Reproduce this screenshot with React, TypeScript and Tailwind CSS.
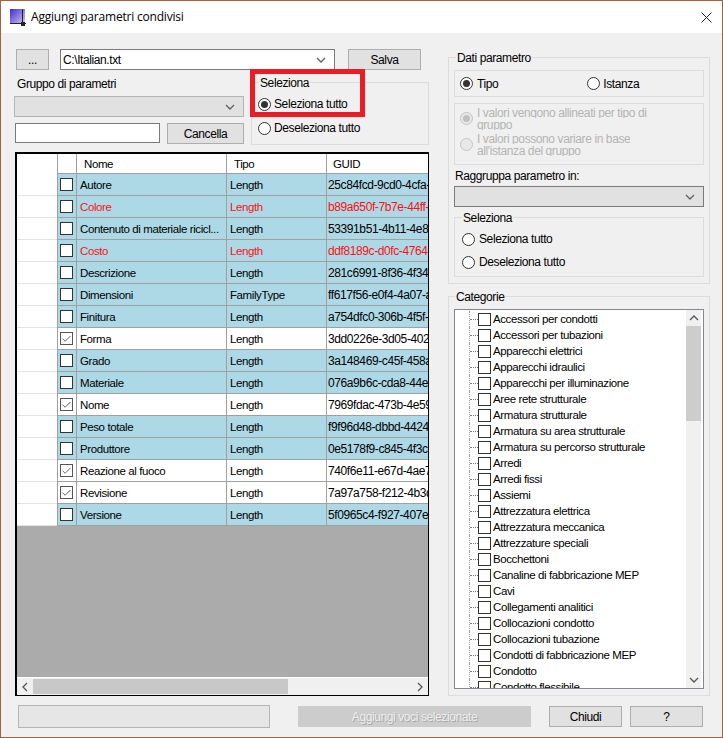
import React from 'react';
import { Check } from 'lucide-react';

const rows = [
  { name: 'Autore', tipo: 'Length', guid: '25c84fcd-9cd0-4cfa-8a11' },
  { name: 'Colore', tipo: 'Length', guid: 'b89a650f-7b7e-44ff-8a11', red: true },
  { name: 'Contenuto di materiale ricicl...', tipo: 'Length', guid: '53391b51-4b11-4e8a-8a11' },
  { name: 'Costo', tipo: 'Length', guid: 'ddf8189c-d0fc-4764-8a11', red: true },
  { name: 'Descrizione', tipo: 'Length', guid: '281c6991-8f36-4f34-8a11' },
  { name: 'Dimensioni', tipo: 'FamilyType', guid: 'ff617f56-e0f4-4a07-a811' },
  { name: 'Finitura', tipo: 'Length', guid: 'a754dfc0-306b-4f5f-8a11' },
  { name: 'Forma', tipo: 'Length', guid: '3dd0226e-3d05-402a-8a11', checked: true },
  { name: 'Grado', tipo: 'Length', guid: '3a148469-c45f-458a-8a11' },
  { name: 'Materiale', tipo: 'Length', guid: '076a9b6c-cda8-44ea-8a11' },
  { name: 'Nome', tipo: 'Length', guid: '7969fdac-473b-4e59-8a11', checked: true },
  { name: 'Peso totale', tipo: 'Length', guid: 'f9f96d48-dbbd-4424-8a11' },
  { name: 'Produttore', tipo: 'Length', guid: '0e5178f9-c845-4f3c-8a11' },
  { name: 'Reazione al fuoco', tipo: 'Length', guid: '740f6e11-e67d-4ae7-8a11', checked: true },
  { name: 'Revisione', tipo: 'Length', guid: '7a97a758-f212-4b3d-8a11', checked: true },
  { name: 'Versione', tipo: 'Length', guid: '5f0965c4-f927-407e-8a11' },
];

const categories = [
  'Accessori per condotti',
  'Accessori per tubazioni',
  'Apparecchi elettrici',
  'Apparecchi idraulici',
  'Apparecchi per illuminazione',
  'Aree rete strutturale',
  'Armatura strutturale',
  'Armatura su area strutturale',
  'Armatura su percorso strutturale',
  'Arredi',
  'Arredi fissi',
  'Assiemi',
  'Attrezzatura elettrica',
  'Attrezzatura meccanica',
  'Attrezzature speciali',
  'Bocchettoni',
  'Canaline di fabbricazione MEP',
  'Cavi',
  'Collegamenti analitici',
  'Collocazioni condotto',
  'Collocazioni tubazione',
  'Condotti di fabbricazione MEP',
  'Condotto',
  'Condotto flessibile',
];

function Chevron({ dir = 'down', color = '#606060' }: { dir?: 'down' | 'up' | 'left' | 'right'; color?: string }) {
  const pts = {
    down: '1,1 5,5 9,1',
    up: '1,5 5,1 9,5',
    left: '5,1 1,5 5,9',
    right: '1,1 5,5 1,9',
  }[dir];
  const w = dir === 'left' || dir === 'right' ? 6 : 10;
  const h = dir === 'left' || dir === 'right' ? 10 : 6;
  return (
    <svg width={w} height={h} viewBox={`0 0 ${w} ${h}`} fill="none">
      <polyline points={pts} stroke={color} strokeWidth="1.3" />
    </svg>
  );
}

function Radio({ on, disabled }: { on?: boolean; disabled?: boolean }) {
  return (
    <span
      className={`w-[13px] h-[13px] rounded-full border flex items-center justify-center shrink-0 ${
        disabled ? 'border-[#c4c4c4] bg-[#e8e8e8]' : 'border-[#333333] bg-white'
      }`}
    >
      {on && <span className={`w-[7px] h-[7px] rounded-full ${disabled ? 'bg-[#c0c0c0]' : 'bg-[#333333]'}`} />}
    </span>
  );
}

function Btn({ label, className }: { label: string; className: string }) {
  return (
    <div className={`h-[21px] bg-[#e1e1e1] border border-[#adadad] flex items-center justify-center ${className}`}>
      {label}
    </div>
  );
}

function Group({ title, titleLeft, className, children }: { title: string; titleLeft: string; className: string; children?: React.ReactNode }) {
  return (
    <div className={`relative border border-[#dcdcdc] ${className}`}>
      <span className={`absolute -top-[7px] bg-[#f0f0f0] px-[1px] leading-[14px] ${titleLeft}`}>{title}</span>
      {children}
    </div>
  );
}

function GridRow({ row }: { row: (typeof rows)[number] }) {
  const bg = row.checked ? 'bg-white' : 'bg-[#add8e6]';
  const text = row.red ? 'text-[#ff1010]' : 'text-black';
  return (
    <div className={`flex h-[22px] ${text}`}>
      <div className="w-[40px] bg-white border-b border-[#e4e4e4]" />
      <div className={`w-[20px] ${bg} border-l border-r border-b border-[#a0a0a0] flex items-center pl-[2px]`}>
        <span className={`w-[13px] h-[13px] border bg-white flex items-center justify-center ${row.checked ? 'border-[#555555]' : 'border-[#333333]'}`}>
          {row.checked && <Check size={12} strokeWidth={1.8} color="#4a4a4a" />}
        </span>
      </div>
      <div className={`w-[150px] ${bg} border-r border-b border-[#a0a0a0] pl-[3px] flex items-center whitespace-nowrap overflow-hidden text-[11.5px]`}>
        {row.name}
      </div>
      <div className={`w-[100px] ${bg} border-r border-b border-[#a0a0a0] pl-[3px] flex items-center text-[11.5px]`}>{row.tipo}</div>
      <div className={`flex-1 ${bg} border-b border-[#a0a0a0] pl-[1px] flex items-center whitespace-nowrap overflow-hidden`}>{row.guid}</div>
    </div>
  );
}

export default function App() {
  return (
    <div className="w-[723px] h-[738px] border border-[#a5623a] bg-[#f0f0f0] flex flex-col overflow-hidden text-[12px] text-black font-['Liberation_Sans',sans-serif] tracking-[-0.4px] leading-[14px]">
      {/* Title bar */}
      <div className="h-[32px] shrink-0 bg-white flex items-center pl-[9px] pr-[10px] tracking-[-0.2px] font-['Open_Sans',sans-serif]">
        <svg width="17" height="17" viewBox="0 0 17 17">
          <defs>
            <linearGradient id="ico" x1="0" y1="0" x2="1" y2="1">
              <stop offset="0" stopColor="#3a2fd0" />
              <stop offset="1" stopColor="#d8c8f0" />
            </linearGradient>
          </defs>
          <rect width="15" height="15" fill="url(#ico)" />
          <path d="M0 14.5H16M12.5 0V16" stroke="#222" strokeWidth="1" />
          <rect x="11" y="13" width="4" height="4" fill="#222" />
        </svg>
        <span className="ml-[4px]">Aggiungi parametri condivisi</span>
        <svg className="ml-auto" width="11" height="11" viewBox="0 0 11 11" stroke="#222" strokeWidth="1">
          <path d="M0.5 0.5L10.5 10.5M10.5 0.5L0.5 10.5" />
        </svg>
      </div>

      {/* Main columns */}
      <div className="flex h-[663px] shrink-0">
        {/* Left column */}
        <div className="w-[415px] ml-[14px] flex flex-col">
          <div className="flex mt-[16px] relative">
            <Btn label="..." className="w-[33px] ml-[1px]" />
            <div className="w-[275px] h-[21px] ml-[11px] bg-white border border-[#7a7a7a] flex items-center pl-[2px] pr-[8px] justify-between">
              C:\Italian.txt
              <Chevron />
            </div>
            <Btn label="Salva" className="w-[73px] ml-[13px]" />
          </div>

          <div className="flex mt-[6px] relative">
            <div className="w-[230px] -ml-[1px] flex flex-col">
              <span className="pl-[3px] mt-[1px]">Gruppo di parametri</span>
              <div className="h-[21px] mt-[5px] bg-[#e1e1e1] border border-[#b4b4b4] flex items-center justify-end pr-[8px]">
                <Chevron />
              </div>
              <div className="flex mt-[6px] pl-[1px]">
                <div className="w-[145px] h-[20px] bg-white border border-[#7a7a7a]" />
                <Btn label="Cancella" className="w-[77px] ml-[7px]" />
              </div>
            </div>
            <Group title="Seleziona" titleLeft="left-[7px]" className="w-[178px] h-[63px] ml-[7px] mt-[6px]">
              <div className="flex items-center ml-[6px] mt-[14px] gap-[3px]">
                <Radio on />
                <span>Seleziona tutto</span>
              </div>
              <div className="flex items-center ml-[6px] mt-[10px] gap-[3px]">
                <Radio />
                <span>Deseleziona tutto</span>
              </div>
            </Group>
            {/* Red highlight drawn on the screenshot */}
            <div className="absolute left-[235px] -top-[7px] w-[115px] h-[48px] border-[5px] border-[#ed1c24]" />
          </div>

          {/* Data grid */}
          <div className="mt-[7px] h-[544px] w-[414px] border-2 border-r border-b border-black flex flex-col">
            <div className="flex h-[20px] bg-white text-[11.5px]">
              <div className="w-[40px]" />
              <div className="w-[20px] border-l border-r border-b border-[#a0a0a0]" />
              <div className="w-[150px] border-r border-b border-[#a0a0a0] pl-[7px] flex items-center">Nome</div>
              <div className="w-[100px] border-r border-b border-[#a0a0a0] pl-[7px] flex items-center">Tipo</div>
              <div className="flex-1 border-b border-[#a0a0a0] pl-[6px] flex items-center">GUID</div>
            </div>
            {rows.map((r) => (
              <GridRow key={r.name} row={r} />
            ))}
            <div className="flex-1 bg-[#ababab]" />
            <div className="h-[18px] bg-[#f0f0f0] border-t border-white flex items-center">
              <span className="w-[16px] flex justify-center"><Chevron dir="left" color="#555555" /></span>
              <span className="w-[255px] h-[15px] bg-[#c8c8c8]" />
              <span className="ml-auto w-[16px] flex justify-center"><Chevron dir="right" color="#555555" /></span>
            </div>
          </div>
        </div>

        {/* Right column */}
        <div className="w-[262px] ml-[18px] flex flex-col mt-[24px]">
          <Group title="Dati parametro" titleLeft="left-[7px]" className="h-[227px] px-[5px] pt-[12px]">
            <div className="h-[27px] border border-[#dcdcdc] flex items-center relative pl-[5px]">
              <Radio on />
              <span className="ml-[4px]">Tipo</span>
              <span className="ml-[89px]"><Radio /></span>
              <span className="ml-[3px]">Istanza</span>
            </div>
            <div className="h-[62px] mt-[6px] border border-[#dcdcdc] pl-[5px] pt-[3px] text-[#b4b4b4]">
              <div className="flex h-[26px]">
                <span className="mt-[5px]"><Radio on disabled /></span>
                <div className="ml-[4px]">
                  <div className="h-[11px] mb-[1px] overflow-hidden leading-[12px]">I valori vengono allineati per tipo di</div>
                  <div className="h-[11px] overflow-hidden leading-[12px]">gruppo</div>
                </div>
              </div>
              <div className="flex h-[26px]">
                <span className="mt-[5px]"><Radio disabled /></span>
                <div className="ml-[4px]">
                  <div className="h-[11px] mb-[1px] overflow-hidden leading-[12px]">I valori possono variare in base</div>
                  <div className="h-[11px] overflow-hidden leading-[12px]">all'istanza del gruppo</div>
                </div>
              </div>
            </div>
            <div className="mt-[2px] pl-[1px] h-[18px] flex items-center">Raggruppa parametro in:</div>
            <div className="h-[21px] mt-[1px] bg-[#e1e1e1] border border-[#7a7a7a] flex items-center justify-end pr-[8px]">
              <Chevron />
            </div>
            <Group title="Seleziona" titleLeft="left-[7px]" className="h-[60px] mt-[10px]">
              <div className="flex items-center ml-[7px] mt-[14px] gap-[4px]">
                <Radio />
                <span>Seleziona tutto</span>
              </div>
              <div className="flex items-center ml-[7px] mt-[9px] gap-[4px]">
                <Radio />
                <span>Deseleziona tutto</span>
              </div>
            </Group>
          </Group>

          <Group title="Categorie" titleLeft="left-[6px]" className="h-[400px] mt-[12px] px-[5px] pt-[12px]">
            <div className="h-[380px] border border-[#828790] bg-white flex overflow-hidden">
              <div className="flex-1 pt-[1px] overflow-hidden text-[11.5px] tracking-[-0.4px]">
                {categories.map((c) => (
                  <div key={c} className="flex h-[16px] items-center ml-[14px] whitespace-nowrap border-l border-dotted border-[#a0a0a0]">
                    <span className="w-[8px] border-t border-dotted border-[#808080]" />
                    <span className="w-[13px] h-[13px] border border-[#333333] bg-white shrink-0" />
                    <span className="ml-[2px]">{c}</span>
                  </div>
                ))}
              </div>
              <div className="w-[15px] mr-[2px] flex flex-col items-center bg-[#f0f0f0]">
                <div className="h-[16px] flex items-center justify-center"><Chevron dir="up" color="#555555" /></div>
                <div className="w-full h-[95px] bg-[#cdcdcd]" />
                <div className="mt-auto h-[16px] flex items-center justify-center"><Chevron color="#555555" /></div>
              </div>
            </div>
          </Group>
        </div>
      </div>

      {/* Footer buttons */}
      <div className="flex mt-[9px] ml-[17px]">
        <div className="w-[252px] h-[23px] bg-[#e6e6e6] border border-[#b4b4b4]" />
        <div className="w-[233px] h-[21px] mt-[1px] ml-[28px] bg-[#cccccc] flex items-center justify-center text-[#eeeeee] [text-shadow:1px_1px_0_#a8a8a8]">
          Aggiungi voci selezionate
        </div>
        <Btn label="Chiudi" className="w-[73px] ml-[18px] mt-[1px]" />
        <Btn label="?" className="w-[73px] ml-[8px] mt-[1px]" />
      </div>
    </div>
  );
}
